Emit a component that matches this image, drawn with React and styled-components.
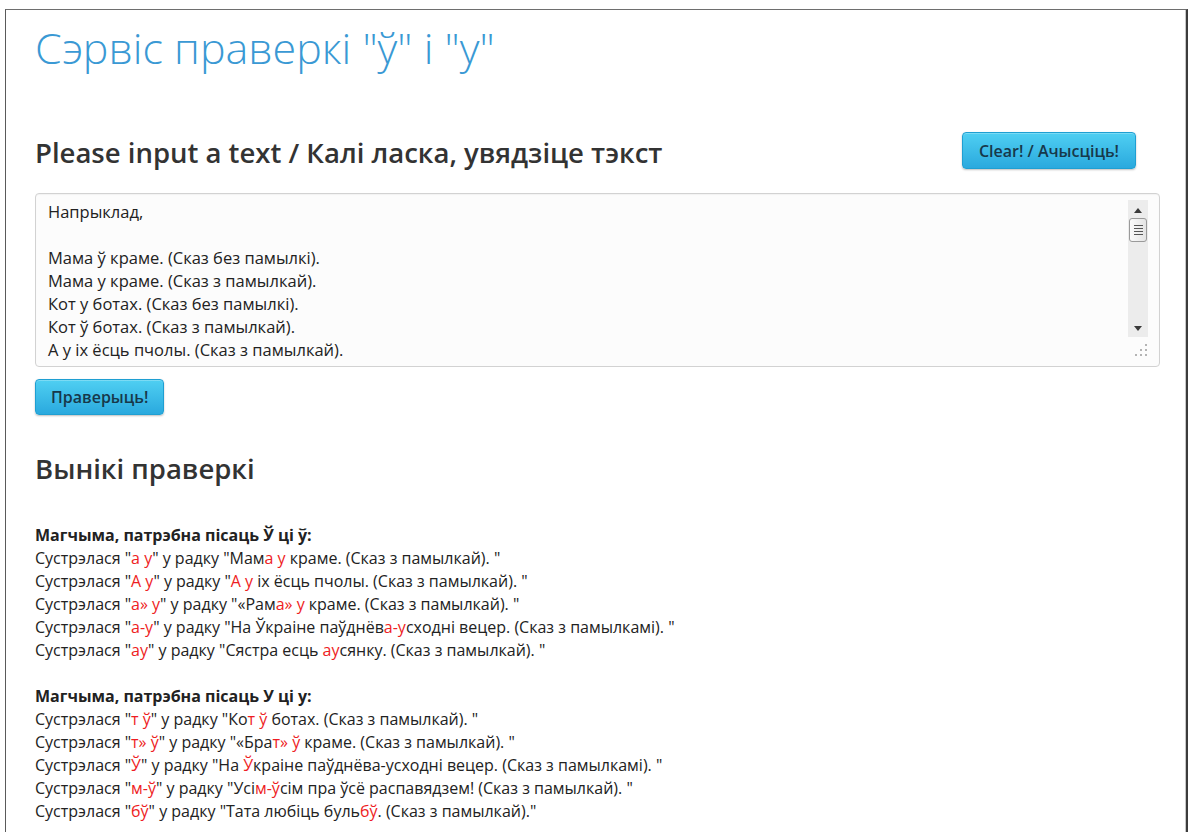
import React from "react";
import styled, {createGlobalStyle} from "styled-components";

const GlobalStyle = createGlobalStyle`
  html, body {
    margin: 0;
    padding: 0;
    background: #ffffff;
  }
  body {
    font-family: "Open Sans", "Liberation Sans", sans-serif;
    color: #222222;
  }
`;

const SAMPLE = [
  "Напрыклад,",
  "",
  "Мама ў краме. (Сказ без памылкі).",
  "Мама у краме. (Сказ з памылкай).",
  "Кот у ботах. (Сказ без памылкі).",
  "Кот ў ботах. (Сказ з памылкай).",
  "А у іх ёсць пчолы. (Сказ з памылкай).",
  "«Рама» у краме. (Сказ з памылкай).",
  "«Брат» ў краме. (Сказ з памылкай).",
  "На Ўкраіне паўднёва-усходні вецер. (Сказ з памылкамі).",
  "Усім-ўсім пра ўсё распавядзем! (Сказ з памылкай).",
  "Сястра есць аусянку. (Сказ з памылкай).",
  "Тата любіць бульбў. (Сказ з памылкай).",
].join("\n");

// each hit: [found fragment, line parts split as [before, marked, after]]
const GROUPS = [
  {
    title: "Магчыма, патрэбна пісаць Ў ці ў:",
    hits: [
      ["а у", ["Мам", "а у", " краме. (Сказ з памылкай). "]],
      ["А у", ["", "А у", " іх ёсць пчолы. (Сказ з памылкай). "]],
      ["а» у", ["«Рам", "а» у", " краме. (Сказ з памылкай). "]],
      ["а-у", ["На Ўкраіне паўднёв", "а-у", "сходні вецер. (Сказ з памылкамі). "]],
      ["ау", ["Сястра есць ", "ау", "сянку. (Сказ з памылкай). "]],
    ],
  },
  {
    title: "Магчыма, патрэбна пісаць У ці у:",
    hits: [
      ["т ў", ["Ко", "т ў", " ботах. (Сказ з памылкай). "]],
      ["т» ў", ["«Бра", "т» ў", " краме. (Сказ з памылкай). "]],
      ["Ў", ["На ", "Ў", "краіне паўднёва-усходні вецер. (Сказ з памылкамі). "]],
      ["м-ў", ["Усі", "м-ў", "сім пра ўсё распавядзем! (Сказ з памылкай). "]],
      ["бў", ["Тата любіць буль", "бў", ". (Сказ з памылкай)."]],
    ],
  },
];

const App = () => (
  <>
    <GlobalStyle />
    <Frame>
      <Title>Сэрвіс праверкі "ў" і "у"</Title>

      <HeadRow>
        <Heading>Please input a text / Калі ласка, увядзіце тэкст</Heading>
        <Button>Clear! / Ачысціць!</Button>
      </HeadRow>

      <TextBox>
        <Input readOnly value={SAMPLE} spellCheck={false} />
        <Rail>
          <Track>
            <Arrow viewBox="0 0 8 5">
              <path d="M0 5 L4 0 L8 5 Z" />
            </Arrow>
            <Thumb>
              <Grip />
              <Grip />
              <Grip />
              <Grip />
            </Thumb>
            <TrackSpacer />
            <Arrow viewBox="0 0 8 5">
              <path d="M0 0 L8 0 L4 5 Z" />
            </Arrow>
          </Track>
          <ResizeGrip viewBox="0 0 14 14">
            <rect x="11" y="1" width="2" height="2" />
            <rect x="6" y="6" width="2" height="2" />
            <rect x="11" y="6" width="2" height="2" />
            <rect x="1" y="11" width="2" height="2" />
            <rect x="6" y="11" width="2" height="2" />
            <rect x="11" y="11" width="2" height="2" />
          </ResizeGrip>
        </Rail>
      </TextBox>

      <CheckButton>Праверыць!</CheckButton>

      <ResultsHeading>Вынікі праверкі</ResultsHeading>

      <Results>
        {GROUPS.map((group) => (
          <Group key={group.title}>
            <GroupTitle>{group.title}</GroupTitle>
            {group.hits.map(([found, [before, mark, after]]) => (
              <Line key={before + mark}>
                Сустрэлася "<Mark>{found}</Mark>" у радку "{before}
                <Mark>{mark}</Mark>
                {after}"
              </Line>
            ))}
          </Group>
        ))}
      </Results>
    </Frame>
  </>
);

const Frame = styled.div`
  box-sizing: border-box;
  margin: 9px 0 0 5px;
  width: 1183px;
  min-height: 823px;
  padding: 10px 26px 20px 29px;
  border-top: 1px solid #6e6e6e;
  border-left: 1px solid #5a5a5a;
  border-right: 2px solid #3c3c3c;
  box-shadow: inset -1px 0 0 #c8c8c8;
`;

const Title = styled.h1`
  margin: 0;
  font-size: 43px;
  line-height: 56px;
  font-weight: 300;
  color: #3a99d4;
`;

const HeadRow = styled.div`
  display: flex;
  justify-content: space-between;
  align-items: flex-start;
  margin-top: 56px;
  padding-right: 24px;
`;

const Heading = styled.h2`
  margin: 5px 0 0;
  font-size: 27.5px;
  line-height: 32px;
  font-weight: 600;
  color: #333333;
`;

const Button = styled.button`
  box-sizing: border-box;
  height: 37px;
  padding: 0 16px;
  font-family: "Open Sans", "Liberation Sans", sans-serif;
  font-size: 16px;
  font-weight: 600;
  color: #17384a;
  background: linear-gradient(to bottom, #4fcff2 0%, #2aa9de 100%);
  border: 1px solid #1f9fd2;
  border-radius: 4px;
  box-shadow: 0 1px 2px rgba(0, 0, 0, 0.25), inset 0 1px 0 rgba(255, 255, 255, 0.25);
  cursor: pointer;
`;

const CheckButton = styled(Button)`
  display: block;
  height: 36px;
  margin-top: 12px;
  padding: 0 15px;
`;

const TextBox = styled.div`
  box-sizing: border-box;
  display: flex;
  margin-top: 24px;
  width: 1125px;
  height: 174px;
  background: #fcfcfc;
  border: 1px solid #d2d2d2;
  border-radius: 4px;
  box-shadow: inset 0 1px 1px rgba(0, 0, 0, 0.04);
`;

const Input = styled.textarea`
  flex: 1;
  margin: 0;
  padding: 6px 12px;
  border: 0;
  outline: none;
  resize: none;
  overflow: hidden;
  background: transparent;
  font-family: "Open Sans", "Liberation Sans", sans-serif;
  font-size: 16.5px;
  line-height: 23px;
  color: #222222;
`;

const Rail = styled.div`
  display: flex;
  flex-direction: column;
  align-items: flex-end;
  width: 20px;
  padding: 6px 11px 0 0;
`;

const Track = styled.div`
  display: flex;
  flex-direction: column;
  align-items: center;
  width: 20px;
  height: 137px;
  padding: 8px 0 6px;
  box-sizing: border-box;
  background: #ececec;
`;

const Arrow = styled.svg`
  width: 8px;
  height: 5px;
  fill: #3a3a3a;
`;

const Thumb = styled.div`
  box-sizing: border-box;
  display: flex;
  flex-direction: column;
  justify-content: center;
  align-items: center;
  gap: 2px;
  width: 18px;
  height: 24px;
  margin-top: 5px;
  background: linear-gradient(to right, #fafafa, #e4e4e4);
  border: 1px solid #9a9a9a;
  border-radius: 3px;
`;

const Grip = styled.div`
  width: 9px;
  height: 1px;
  background: #555555;
`;

const TrackSpacer = styled.div`
  flex: 1;
`;

const ResizeGrip = styled.svg`
  width: 14px;
  height: 14px;
  margin-top: 6px;
  fill: #b4b4b4;
`;

const ResultsHeading = styled(Heading)`
  margin: 38px 0 0;
`;

const Results = styled.div`
  margin-top: 39px;
  font-size: 16px;
  line-height: 23px;
  color: #222222;
`;

const Group = styled.div`
  & + & {
    margin-top: 23px;
  }
`;

const GroupTitle = styled.div`
  font-weight: 700;
`;

const Line = styled.div``;

const Mark = styled.span`
  color: #ee1d23;
`;

export default App;
